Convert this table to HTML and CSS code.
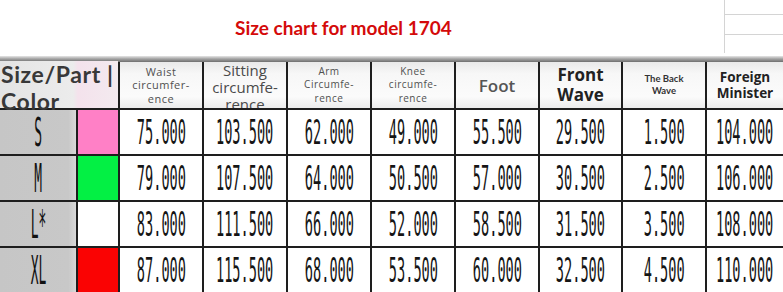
FILE: index.html
```html
<!DOCTYPE html>
<html>
<head>
<meta charset="utf-8">
<link rel="stylesheet" href="styles.css">
</head>
<body>
<div class="page">
  <header class="top">
    <h1 class="title">Size chart for model 1704</h1>
    <div class="sheet"><div class="sheet-row"></div><div class="sheet-row"></div><div class="sheet-row last"></div></div>
  </header>
  <div class="band"></div>
  <div class="chart">
    <div class="hd hd-size">Size/Part |<br>Color</div>
    <div class="hd hd-small">Waist<br>circumfer-<br>ence</div>
    <div class="hd hd-sit">Sitting<br>circumfe-<br>rence</div>
    <div class="hd hd-small hd-xs">Arm<br>Circumfe-<br>rence</div>
    <div class="hd hd-small hd-xs">Knee<br>circumfe-<br>rence</div>
    <div class="hd hd-foot">Foot</div>
    <div class="hd hd-front">Front<br>Wave</div>
    <div class="hd hd-back">The Back<br>Wave</div>
    <div class="hd hd-foreign">Foreign<br>Minister</div>

    <div class="lbl"><span class="num tall">S</span></div>
    <div class="sw pink"></div>
    <div class="cell"><span class="num">75.000</span></div>
    <div class="cell"><span class="num">103.500</span></div>
    <div class="cell"><span class="num">62.000</span></div>
    <div class="cell"><span class="num">49.000</span></div>
    <div class="cell"><span class="num">55.500</span></div>
    <div class="cell"><span class="num">29.500</span></div>
    <div class="cell"><span class="num">1.500</span></div>
    <div class="cell"><span class="num">104.000</span></div>

    <div class="lbl"><span class="num tall">M</span></div>
    <div class="sw green"></div>
    <div class="cell"><span class="num">79.000</span></div>
    <div class="cell"><span class="num">107.500</span></div>
    <div class="cell"><span class="num">64.000</span></div>
    <div class="cell"><span class="num">50.500</span></div>
    <div class="cell"><span class="num">57.000</span></div>
    <div class="cell"><span class="num">30.500</span></div>
    <div class="cell"><span class="num">2.500</span></div>
    <div class="cell"><span class="num">106.000</span></div>

    <div class="lbl"><span class="num tall">L*</span></div>
    <div class="sw white"></div>
    <div class="cell"><span class="num">83.000</span></div>
    <div class="cell"><span class="num">111.500</span></div>
    <div class="cell"><span class="num">66.000</span></div>
    <div class="cell"><span class="num">52.000</span></div>
    <div class="cell"><span class="num">58.500</span></div>
    <div class="cell"><span class="num">31.500</span></div>
    <div class="cell"><span class="num">3.500</span></div>
    <div class="cell"><span class="num">108.000</span></div>

    <div class="lbl"><span class="num tall">XL</span></div>
    <div class="sw red"></div>
    <div class="cell"><span class="num">87.000</span></div>
    <div class="cell"><span class="num">115.500</span></div>
    <div class="cell"><span class="num">68.000</span></div>
    <div class="cell"><span class="num">53.500</span></div>
    <div class="cell"><span class="num">60.000</span></div>
    <div class="cell"><span class="num">32.500</span></div>
    <div class="cell"><span class="num">4.500</span></div>
    <div class="cell"><span class="num">110.000</span></div>
  </div>
</div>
</body>
</html>
```
FILE: styles.css
```css
html, body {
  margin: 0;
  padding: 0;
  background: #fff;
}
.page {
  width: 783px;
  height: 292px;
  overflow: hidden;
  display: flex;
  flex-direction: column;
}
.top {
  height: 56px;
  display: flex;
  align-items: flex-start;
}
.title {
  flex: 1;
  margin: 0;
  padding: 16px 0 0 235px;
  font-family: Lato, "Open Sans", sans-serif;
  font-weight: 700;
  font-size: 19px;
  line-height: 23px;
  color: #d40a0a;
}
.sheet {
  width: 58px;
  height: 53px;
  border-left: 1px solid #d4d4d4;
  display: flex;
  flex-direction: column;
}
.sheet-row {
  height: 16px;
  border-bottom: 1px solid #d4d4d4;
}
.sheet-row + .sheet-row {
  height: 21px;
}
.sheet-row.last {
  border-bottom: none;
}
.band {
  height: 6px;
  background: linear-gradient(#e6e6e6, #a0a0a0 50%, #6e6e6e);
}
.chart {
  display: grid;
  grid-template-columns: 76px 40px 82px 82px 82px 82px 82px 81px 82px 76px;
  grid-template-rows: 46px 44px 44px 44px 44px;
  gap: 2px;
  background: #1e1e1e;
}
.hd {
  background: linear-gradient(#e9e9e9, #f7f7f7 25%, #fbfbfb 75%, #ececec);
  color: #4a4a4a;
  font-family: "Open Sans", Lato, sans-serif;
  text-align: center;
  display: flex;
  align-items: center;
  justify-content: center;
  overflow: hidden;
}
.hd-size {
  grid-column: 1 / 3;
  justify-content: flex-start;
  align-items: flex-start;
  overflow: visible;
  text-align: left;
  padding-left: 1px;
  font-family: Lato, sans-serif;
  font-weight: 700;
  font-size: 23px;
  letter-spacing: 0.6px;
  line-height: 27px;
  margin-top: -1px;
  color: #383838;
  position: relative;
  z-index: 1;
  background: linear-gradient(90deg, #e4e4e4 0, #ececec 62%, #f4e2ec 66%, #f3eaef 100%);
}
.hd-small {
  font-size: 11px;
  letter-spacing: 0.5px;
  line-height: 13.5px;
  color: #505050;
}
.hd-xs {
  font-size: 10px;
}
.hd-sit {
  align-items: flex-start;
  font-size: 15px;
  line-height: 17px;
  color: #4a4a4a;
}
.hd-foot {
  font-size: 17px;
  font-weight: 600;
  color: #555;
}
.hd-front {
  font-size: 17px;
  line-height: 20px;
  font-weight: 700;
  color: #222;
  padding-bottom: 1px;
}
.hd-back {
  font-family: Lato, sans-serif;
  font-size: 9.5px;
  line-height: 12px;
  font-weight: 700;
  color: #333;
}
.hd-foreign {
  font-size: 13.5px;
  line-height: 16px;
  font-weight: 700;
  color: #222;
}
.lbl {
  background: linear-gradient(90deg, #c6c6c6 0, #c8c8c8 90%, #d8d8d8 100%);
  display: flex;
  align-items: center;
  justify-content: center;
}
.sw.pink { background: #ff80c6; }
.sw.green { background: #03f044; }
.sw.white { background: #fff; }
.sw.red { background: #fa0303; }
.cell {
  background: #fff;
  display: flex;
  align-items: center;
  justify-content: center;
}
.num {
  display: inline-block;
  font-family: "DejaVu Sans Mono", "Liberation Mono", monospace;
  font-size: 34px;
  line-height: 34px;
  color: #151515;
  transform: scaleX(0.4);
  white-space: nowrap;
}
.num.tall {
  transform: scale(0.38, 1.15);
  color: #111;
}
```
